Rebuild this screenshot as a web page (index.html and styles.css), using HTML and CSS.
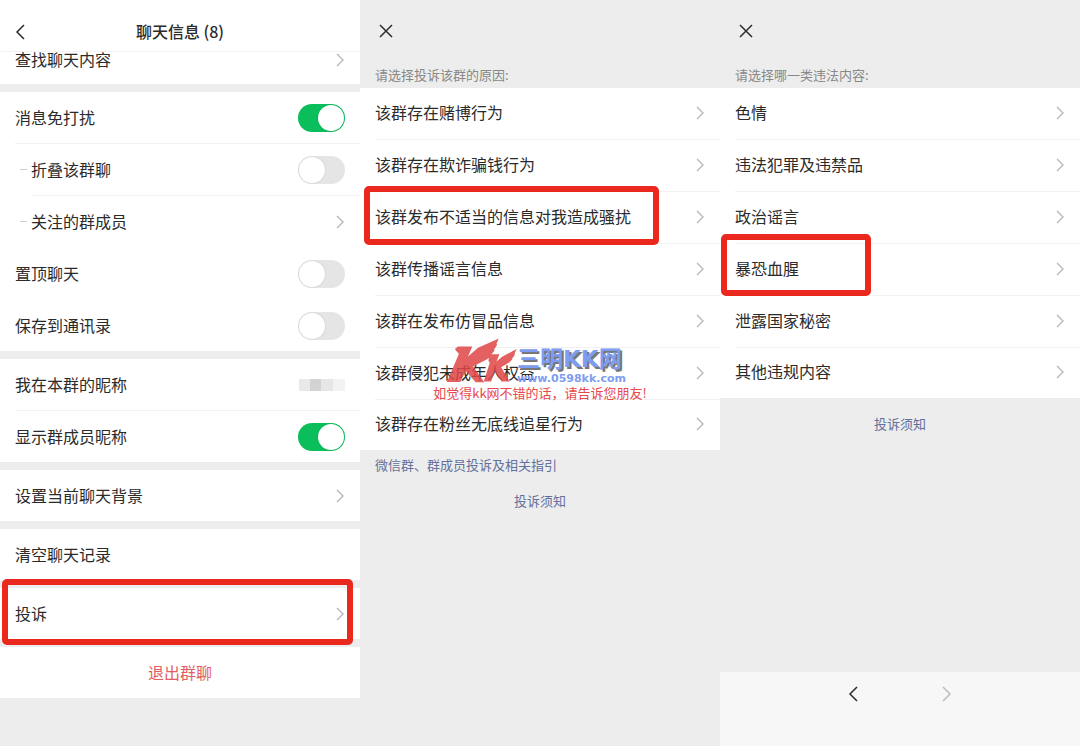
FILE: index.html
```
<!DOCTYPE html>
<html lang="zh-CN">

<head>
    <meta charset="UTF-8">
    <meta name="viewport" content="width=device-width, initial-scale=1.0">
    <title>聊天信息</title>
    <link rel="stylesheet" href="styles.css">
</head>

<body>
    <!-- 箭头图标 -->
    <svg class="sprite" aria-hidden="true">
        <symbol id="arrow" viewBox="0 0 8 14">
            <path d="M1 1l6 6-6 6" fill="none" stroke="currentColor" stroke-width="1.4" />
        </symbol>
        <symbol id="back" viewBox="0 0 10 16">
            <path d="M9 1L2 8l7 7" fill="none" stroke="currentColor" stroke-width="1.5" />
        </symbol>
        <symbol id="close" viewBox="0 0 14 14">
            <path d="M1 1l12 12M13 1L1 13" fill="none" stroke="currentColor" stroke-width="1.5" />
        </symbol>
    </svg>

    <main class="screens">
        <!-- 聊天信息 -->
        <section class="screen">
            <header class="title-bar">
                <button class="icon-btn" aria-label="返回"><svg class="back"><use href="#back" /></svg></button>
                <h1>聊天信息 (8)</h1>
            </header>

            <div class="group scrolled">
                <a href="#" class="row"><span class="name">查找聊天内容</span><svg class="arrow"><use href="#arrow" /></svg></a>
            </div>

            <div class="group">
                <label class="row"><span class="name">消息免打扰</span><input type="checkbox" class="switch" checked></label>
                <label class="row sub"><span class="name">折叠该群聊</span><input type="checkbox" class="switch"></label>
                <a href="#" class="row sub deep"><span class="name">关注的群成员</span><svg class="arrow"><use href="#arrow" /></svg></a>
                <label class="row plain"><span class="name">置顶聊天</span><input type="checkbox" class="switch"></label>
                <label class="row plain"><span class="name">保存到通讯录</span><input type="checkbox" class="switch"></label>
            </div>

            <div class="group">
                <a href="#" class="row"><span class="name">我在本群的昵称</span>
                    <svg class="mosaic" viewBox="0 0 46 12">
                        <rect width="11" height="12" fill="#e9e9e9" />
                        <rect x="11" width="11" height="12" fill="#d3d3d3" />
                        <rect x="22" width="12" height="12" fill="#e6e6e6" />
                        <rect x="34" width="12" height="12" fill="#f2f2f2" />
                    </svg>
                </a>
                <label class="row"><span class="name">显示群成员昵称</span><input type="checkbox" class="switch" checked></label>
            </div>

            <div class="group">
                <a href="#" class="row"><span class="name">设置当前聊天背景</span><svg class="arrow"><use href="#arrow" /></svg></a>
            </div>

            <div class="group">
                <button class="row"><span class="name">清空聊天记录</span></button>
            </div>

            <div class="group">
                <a href="#" class="row"><span class="name">投诉</span><svg class="arrow"><use href="#arrow" /></svg><span class="mark mark-complain"></span></a>
            </div>

            <div class="group">
                <button class="row quit"><span class="name">退出群聊</span></button>
            </div>
        </section>

        <!-- 投诉原因 -->
        <section class="screen">
            <header class="close-bar">
                <button class="icon-btn" aria-label="关闭"><svg class="close"><use href="#close" /></svg></button>
            </header>
            <h2>请选择投诉该群的原因:</h2>
            <div class="group reasons">
                <a href="#" class="row"><span class="name">该群存在赌博行为</span><svg class="arrow"><use href="#arrow" /></svg></a>
                <a href="#" class="row"><span class="name">该群存在欺诈骗钱行为</span><svg class="arrow"><use href="#arrow" /></svg></a>
                <a href="#" class="row"><span class="name">该群发布不适当的信息对我造成骚扰</span><svg class="arrow"><use href="#arrow" /></svg><span class="mark mark-reason"></span></a>
                <a href="#" class="row"><span class="name">该群传播谣言信息</span><svg class="arrow"><use href="#arrow" /></svg></a>
                <a href="#" class="row"><span class="name">该群在发布仿冒品信息</span><svg class="arrow"><use href="#arrow" /></svg></a>
                <a href="#" class="row"><span class="name">该群侵犯未成年人权益</span><svg class="arrow"><use href="#arrow" /></svg></a>
                <a href="#" class="row"><span class="name">该群存在粉丝无底线追星行为</span><svg class="arrow"><use href="#arrow" /></svg></a>

                <!-- 水印 -->
                <div class="watermark">
                    <div class="brand">
                        <svg class="logo" viewBox="78 42 212 134">
                            <path d="M113 67h43l-13 30 30-26 62-28-7 16 2 3-9 14 1 4-10 12 0 4-12 9-42 22 34 47h-26l-30-34-16 33H80l36-84-8-8-4-6z" />
                            <path d="M200 90h37l-9 22 17-14 43-23-6 14 1 3-8 11 0 3-8 8-25 15 25 43h-24l-20-30-11 30h-22l18-56-4-6 2-12z" />
                        </svg>
                        <div class="site">
                            <strong>三明KK网</strong>
                            <span>www.0598kk.com</span>
                        </div>
                    </div>
                    <p>如觉得kk网不错的话，请告诉您朋友!</p>
                </div>
            </div>
            <a href="#" class="guide">微信群、群成员投诉及相关指引</a>
            <a href="#" class="notice">投诉须知</a>
        </section>

        <!-- 违法内容类别 -->
        <section class="screen">
            <header class="close-bar">
                <button class="icon-btn" aria-label="关闭"><svg class="close"><use href="#close" /></svg></button>
            </header>
            <h2>请选择哪一类违法内容:</h2>
            <div class="group reasons">
                <a href="#" class="row"><span class="name">色情</span><svg class="arrow"><use href="#arrow" /></svg></a>
                <a href="#" class="row"><span class="name">违法犯罪及违禁品</span><svg class="arrow"><use href="#arrow" /></svg></a>
                <a href="#" class="row"><span class="name">政治谣言</span><svg class="arrow"><use href="#arrow" /></svg></a>
                <a href="#" class="row"><span class="name">暴恐血腥</span><svg class="arrow"><use href="#arrow" /></svg><span class="mark mark-type"></span></a>
                <a href="#" class="row"><span class="name">泄露国家秘密</span><svg class="arrow"><use href="#arrow" /></svg></a>
                <a href="#" class="row"><span class="name">其他违规内容</span><svg class="arrow"><use href="#arrow" /></svg></a>
            </div>
            <a href="#" class="notice">投诉须知</a>
            <nav class="browser-bar">
                <button class="icon-btn" aria-label="后退"><svg class="back"><use href="#back" /></svg></button>
                <button class="icon-btn" aria-label="前进" disabled><svg class="back forward"><use href="#back" /></svg></button>
            </nav>
        </section>
    </main>
</body>

</html>
```
FILE: styles.css
```
/* 全局样式 */
* {
    box-sizing: border-box;
}

body {
    margin: 0;
    background-color: #ededed;
    color: #2b2b2b;
    font-family: "Noto Sans CJK SC", "Noto Sans", sans-serif;
    font-size: 16px;
    line-height: 24px;
}

a {
    color: inherit;
    text-decoration: none;
}

button {
    padding: 0;
    border: none;
    background: none;
    color: inherit;
    font: inherit;
    cursor: pointer;
}

svg {
    display: block;
    flex-shrink: 0;
}

.sprite {
    position: absolute;
    width: 0;
    height: 0;
}

.screens {
    display: grid;
    grid-template-columns: repeat(3, 1fr);
    min-height: 100vh;
}

.screen {
    display: flex;
    flex-direction: column;
    min-width: 0;
}

/* 顶部栏 */
.title-bar {
    display: grid;
    grid-template-columns: 1fr auto 1fr;
    align-items: center;
    padding: 20px 15px 7px;
    border-bottom: 1px solid #f3f3f3;
    background-color: #fff;
}

.title-bar h1 {
    margin: 0;
    padding-bottom: 2px;
    font-size: 16px;
    font-weight: 500;
    line-height: 22px;
}

.close-bar {
    padding: 24px 19px 0;
}

.back {
    width: 10px;
    height: 16px;
}

.forward {
    transform: scaleX(-1);
}

.close {
    width: 14px;
    height: 14px;
}

.icon-btn {
    display: flex;
}

.icon-btn:disabled {
    color: #bdbdbd;
}

h2 {
    margin: 27px 0 3px;
    padding: 0 15px;
    color: #888;
    font-size: 13px;
    font-weight: 400;
    line-height: 20px;
}

/* 列表 */
.group {
    position: relative;
    background-color: #fff;
}

.group + .group {
    margin-top: 8px;
}

.row {
    position: relative;
    display: flex;
    align-items: center;
    justify-content: space-between;
    width: 100%;
    height: 51px;
    padding: 0 15px;
}

.row + .row {
    height: 52px;
    padding-top: 1px;
}

.row + .row::before {
    content: "";
    position: absolute;
    top: 0;
    left: 15px;
    right: 0;
    border-top: 1px solid #f1f1f1;
}

.row + .plain::before {
    border-color: #fdfdfd;
}

.row + .deep::before {
    left: 31px;
}

.reasons .row {
    padding-bottom: 2px;
}

.reasons .row:last-of-type {
    height: 51px;
}

.name {
    padding-bottom: 2px;
}

.sub {
    padding-left: 31px;
}

.sub::after {
    content: "";
    position: absolute;
    top: 26px;
    left: 20px;
    width: 7px;
    border-top: 1px solid #d0d0d0;
}

.scrolled {
    display: flex;
    align-items: flex-end;
    height: 32px;
    overflow: hidden;
}

.scrolled .row {
    height: 48px;
}

.row.quit {
    justify-content: center;
    color: #e35d62;
}

.arrow {
    width: 8px;
    height: 14px;
    margin-right: 1px;
    color: #b8b8b8;
}

.mosaic {
    width: 46px;
    height: 12px;
}

/* 开关 */
.switch {
    appearance: none;
    display: flex;
    width: 47px;
    height: 28px;
    margin: 0;
    padding: 1px;
    border-radius: 14px;
    background-color: #e5e5e6;
    cursor: pointer;
}

.switch::before {
    content: "";
    width: 26px;
    height: 26px;
    border-radius: 50%;
    background-color: #fff;
    box-shadow: 0 0 2px rgba(0, 0, 0, 0.15);
}

.switch:checked {
    justify-content: flex-end;
    background-color: #0abf5b;
}

/* 红框标记 */
.mark {
    position: absolute;
    z-index: 1;
    border: 6px solid #ea281e;
    border-radius: 5px;
    pointer-events: none;
}

.mark-complain {
    top: -9px;
    right: 7px;
    bottom: -6px;
    left: 2px;
}

.mark-reason {
    top: -5px;
    bottom: -2px;
    left: 4px;
    width: 295px;
}

.mark-type {
    top: -9px;
    bottom: -1px;
    left: 1px;
    width: 150px;
}

/* 链接 */
.guide,
.notice {
    color: #63709c;
    font-size: 13px;
    line-height: 20px;
}

.guide {
    margin: 5px 15px 0;
}

.notice {
    align-self: center;
    margin-top: 16px;
}

.browser-bar {
    display: flex;
    justify-content: center;
    gap: 84px;
    height: 74px;
    margin-top: auto;
    padding-top: 14px;
    background-color: #f7f7f7;
}

/* 水印 */
.watermark {
    position: absolute;
    top: 250px;
    left: 50%;
    display: flex;
    flex-direction: column;
    align-items: center;
    transform: translateX(-50%);
    white-space: nowrap;
    pointer-events: none;
}

.brand {
    display: flex;
    align-items: flex-end;
    margin-right: 8px;
}

.logo {
    width: 71px;
    height: 45px;
    margin-bottom: 2px;
    fill: #e04646;
    opacity: 0.85;
}

.site {
    display: flex;
    flex-direction: column;
    color: #7e9df0;
    font-family: "DejaVu Sans", "Noto Sans CJK SC", sans-serif;
}

.site strong {
    font-size: 23px;
    line-height: 28px;
    text-shadow: 2px 2px 0 #777;
}

.site span {
    font-size: 11px;
    font-weight: 700;
    line-height: 12px;
}

.watermark p {
    margin: 0;
    color: #e8474c;
    font-size: 13px;
    line-height: 16px;
}
```
